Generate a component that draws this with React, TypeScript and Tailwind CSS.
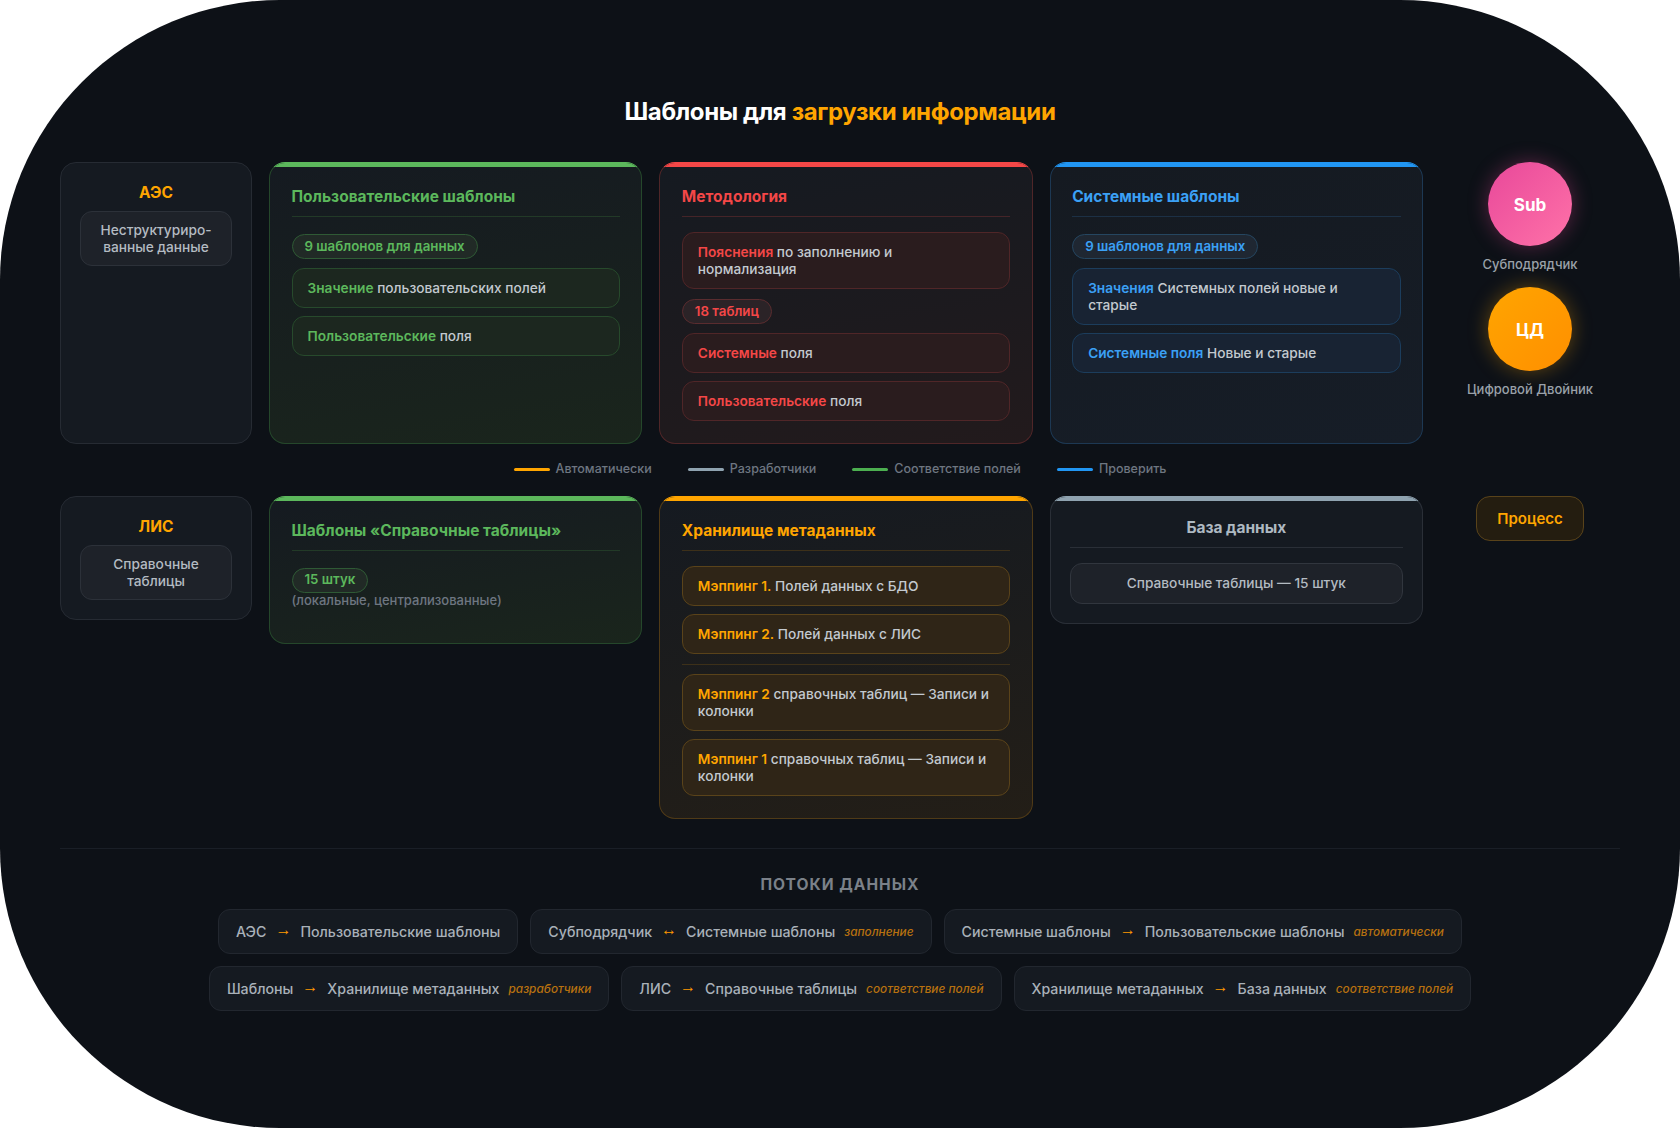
import React from "react";

type Tone = "green" | "red" | "blue" | "orange";

const tones: Record<Tone, { card: string; bar: string; title: string; rule: string; item: string; strong: string; badge: string }> = {
  green: {
    card: "border-[#25472b] border-t-[#5cb85c] bg-[linear-gradient(170deg,#151a21_0%,#1a251c_100%)]",
    bar: "bg-[#5cb85c]",
    title: "text-[#5cb85c]",
    rule: "bg-[#223a27]",
    item: "border-[#274a2c] bg-[#1c271f]",
    strong: "text-[#5cb85c]",
    badge: "border-[#2f5a35] bg-[#212a26] text-[#5cb85c]",
  },
  red: {
    card: "border-[#4f2628] border-t-[#f44747] bg-[linear-gradient(170deg,#151a21_0%,#221a1c_100%)]",
    bar: "bg-[#f44747]",
    title: "text-[#f44747]",
    rule: "bg-[#452428]",
    item: "border-[#502628] bg-[#2a1c1e]",
    strong: "text-[#f44747]",
    badge: "border-[#5a2c2f] bg-[#2b2327] text-[#f44747]",
  },
  blue: {
    card: "border-[#1d3853] border-t-[#2196f3] bg-[linear-gradient(170deg,#151a21_0%,#161d27_100%)]",
    bar: "bg-[#2196f3]",
    title: "text-[#3ba0f5]",
    rule: "bg-[#1c3045]",
    item: "border-[#1c3d5c] bg-[#182333]",
    strong: "text-[#3ba0f5]",
    badge: "border-[#254660] bg-[#1f2732] text-[#3ba0f5]",
  },
  orange: {
    card: "border-[#4f3a17] border-t-[#ffa500] bg-[linear-gradient(170deg,#151a21_0%,#231e17_100%)]",
    bar: "bg-[#ffa500]",
    title: "text-[#ffa500]",
    rule: "bg-[#3d3019]",
    item: "border-[#5a431a] bg-[#2f2517]",
    strong: "text-[#ffa500]",
    badge: "border-[#5a431a] bg-[#2f2517] text-[#ffa500]",
  },
};

function Card({ tone, title, children }: { tone: Tone; title: string; children?: React.ReactNode }) {
  const t = tones[tone];
  return (
    <section className={`relative overflow-hidden rounded-[16px] border px-[21.5px] pb-[22px] pt-[24px] ${t.card}`}>
      <div className={`absolute inset-x-0 top-0 h-[4px] ${t.bar}`} />
      <h2 className={`text-[15.5px] font-bold leading-[20px] ${t.title}`}>{title}</h2>
      <div className={`mb-[15px] mt-[9px] h-px ${t.rule}`} />
      <div className="flex flex-col gap-[8px]">{children}</div>
    </section>
  );
}

function Item({ tone, strong, rest }: { tone: Tone; strong: string; rest: React.ReactNode }) {
  const t = tones[tone];
  return (
    <div className={`rounded-[12px] border px-[15px] py-[10.5px] text-[13.7px] font-medium leading-[17px] text-[#c3c9cf] ${t.item}`}>
      <span className={`font-semibold ${t.strong}`}>{strong}</span> {rest}
    </div>
  );
}

function Badge({ tone, children }: { tone: Tone; children: React.ReactNode }) {
  return (
    <span className={`inline-flex h-[25px] w-fit items-center rounded-full border px-[12px] text-[13.3px] font-semibold ${tones[tone].badge}`}>
      {children}
    </span>
  );
}

function Source({ title, children, stretch }: { title: string; children: React.ReactNode; stretch?: boolean }) {
  return (
    <section className={`rounded-[16px] border border-[#262b33] bg-[#151a21] px-[19px] pb-[19px] pt-[20px] text-center ${stretch ? "self-stretch" : "self-start"}`}>
      <h2 className="mb-[8px] text-[15.5px] font-bold leading-[20px] text-[#ffa500]">{title}</h2>
      <div className="rounded-[12px] border border-[#2c3139] bg-[#1e2229] px-[10px] py-[9.5px] text-[13.7px] font-medium leading-[17px] text-[#b4bbc2]">
        {children}
      </div>
    </section>
  );
}

function Avatar({ label, caption, className }: { label: string; caption: string; className: string }) {
  return (
    <div className="flex flex-col items-center">
      <div className={`flex h-[84px] w-[84px] items-center justify-center rounded-full pt-[4px] text-[17px] font-bold text-white ${className}`}>
        {label}
      </div>
      <div className="mt-[10px] text-[13px] font-medium leading-[16px] text-[#9aa1a9]">{caption}</div>
    </div>
  );
}

const legend = [
  { label: "Автоматически", color: "bg-[#ffa500]" },
  { label: "Разработчики", color: "bg-[#8fa3b0]" },
  { label: "Соответствие полей", color: "bg-[#4caf50]" },
  { label: "Проверить", color: "bg-[#2196f3]" },
];

const flows = [
  { from: "АЭС", arrow: "→", to: "Пользовательские шаблоны" },
  { from: "Субподрядчик", arrow: "↔", to: "Системные шаблоны", note: "заполнение" },
  { from: "Системные шаблоны", arrow: "→", to: "Пользовательские шаблоны", note: "автоматически" },
  { from: "Шаблоны", arrow: "→", to: "Хранилище метаданных", note: "разработчики" },
  { from: "ЛИС", arrow: "→", to: "Справочные таблицы", note: "соответствие полей" },
  { from: "Хранилище метаданных", arrow: "→", to: "База данных", note: "соответствие полей" },
];

export default function App() {
  return (
    <div className="h-[1128px] w-full overflow-hidden bg-white font-[Inter,sans-serif]">
      <main className="h-[1128px] rounded-[280px] bg-[#0d1117] px-[60px] pt-[96px]">
        <h1 className="mb-[34px] text-center text-[24px] font-bold leading-[32px] tracking-[-0.37px] text-white">
          Шаблоны для <span className="text-[#ffa500]">загрузки информации</span>
        </h1>

        <div className="grid grid-cols-[192px_1fr_1fr_1fr_180px] gap-x-[17px]">
          <Source title="АЭС" stretch>
            Неструктуриро-
            <br />
            ванные данные
          </Source>
          <Card tone="green" title="Пользовательские шаблоны">
            <div className="mb-[1px] mt-[1px]">
              <Badge tone="green">9 шаблонов для данных</Badge>
            </div>
            <Item tone="green" strong="Значение" rest="пользовательских полей" />
            <Item tone="green" strong="Пользовательские" rest="поля" />
          </Card>
          <Card tone="red" title="Методология">
            <Item
              tone="red"
              strong="Пояснения"
              rest={
                <>
                  по заполнению и
                  <br />
                  нормализация
                </>
              }
            />
            <div className="my-[1px]">
              <Badge tone="red">18 таблиц</Badge>
            </div>
            <Item tone="red" strong="Системные" rest="поля" />
            <Item tone="red" strong="Пользовательские" rest="поля" />
          </Card>
          <Card tone="blue" title="Системные шаблоны">
            <div className="mb-[1px] mt-[1px]">
              <Badge tone="blue">9 шаблонов для данных</Badge>
            </div>
            <Item tone="blue" strong="Значения" rest="Системных полей новые и старые" />
            <Item tone="blue" strong="Системные поля" rest="Новые и старые" />
          </Card>
          <div className="flex flex-col items-center gap-[15px]">
            <Avatar
              label="Sub"
              caption="Субподрядчик"
              className="bg-[linear-gradient(135deg,#e8489a,#ff72a8)] shadow-[0_0_20px_rgba(236,72,153,0.35)]"
            />
            <Avatar
              label="ЦД"
              caption="Цифровой Двойник"
              className="bg-[linear-gradient(135deg,#ffa500,#ff8f00)] shadow-[0_0_20px_rgba(255,165,0,0.35)]"
            />
          </div>
        </div>

        <div className="flex h-[52px] items-center justify-center gap-[36px] pb-[2px]">
          {legend.map((l) => (
            <div key={l.label} className="flex items-center gap-[6px]">
              <span className={`h-[3px] w-[36px] rounded-full ${l.color}`} />
              <span className="text-[12.5px] font-medium text-[#6e7681]">{l.label}</span>
            </div>
          ))}
        </div>

        <div className="grid grid-cols-[192px_1fr_1fr_1fr_180px] items-start gap-x-[17px]">
          <Source title="ЛИС">
            Справочные
            <br />
            таблицы
          </Source>
          <Card tone="green" title="Шаблоны «Справочные таблицы»">
            <div className="pb-[13px]">
              <Badge tone="green">15 штук</Badge>
              <div className="text-[13px] font-medium leading-[15px] text-[#6e7681]">(локальные, централизованные)</div>
            </div>
          </Card>
          <Card tone="orange" title="Хранилище метаданных">
            <Item tone="orange" strong="Мэппинг 1." rest="Полей данных с БДО" />
            <Item tone="orange" strong="Мэппинг 2." rest="Полей данных с ЛИС" />
            <div className={`my-[1.5px] h-px ${tones.orange.rule}`} />
            <Item tone="orange" strong="Мэппинг 2" rest="справочных таблиц — Записи и колонки" />
            <Item tone="orange" strong="Мэппинг 1" rest="справочных таблиц — Записи и колонки" />
          </Card>
          <section className="relative overflow-hidden rounded-[16px] border border-[#2a2f37] border-t-[#8fa3b0] bg-[#151a21] px-[19px] pb-[19px] pt-[21px]">
            <div className="absolute inset-x-0 top-0 h-[4px] bg-[#8fa3b0]" />
            <h2 className="text-center text-[15.5px] font-bold leading-[20px] text-[#aeb9c2]">База данных</h2>
            <div className="mb-[15px] mt-[9px] h-px bg-[#2a2f37]" />
            <div className="rounded-[12px] border border-[#31363e] bg-[#1e2229] py-[10px] text-center text-[13.7px] font-medium leading-[19px] text-[#b4bbc2]">
              Справочные таблицы — 15 штук
            </div>
          </section>
          <div className="flex justify-center">
            <div className="flex h-[45px] w-[108px] items-center justify-center rounded-[14px] border border-[#59431a] bg-[#241d10] text-[15px] font-semibold text-[#ffa500]">
              Процесс
            </div>
          </div>
        </div>

        <footer className="mt-[29px] border-t border-[#1a1f27] pt-[26px]">
          <h3 className="mb-[14px] text-center text-[15.6px] font-bold uppercase leading-[20px] tracking-[1px] text-[#7b8189]">
            Потоки данных
          </h3>
          <div className="flex flex-wrap justify-center gap-[12px]">
            {flows.map((f) => (
              <div
                key={f.from + f.to}
                className="flex h-[45px] items-center gap-[9px] rounded-[12px] border border-[#22272f] bg-[#151a21] px-[17px] text-[14.2px] font-medium text-[#a9b1b9]"
              >
                <span>{f.from}</span>
                <span className="mb-[4px] font-['Liberation_Sans'] text-[16px] font-bold text-[#ff9800]">{f.arrow}</span>
                <span>{f.to}</span>
                {f.note && <em className="mt-[2px] text-[11.8px] font-medium text-[#b8710f]">{f.note}</em>}
              </div>
            ))}
          </div>
        </footer>
      </main>
    </div>
  );
}
